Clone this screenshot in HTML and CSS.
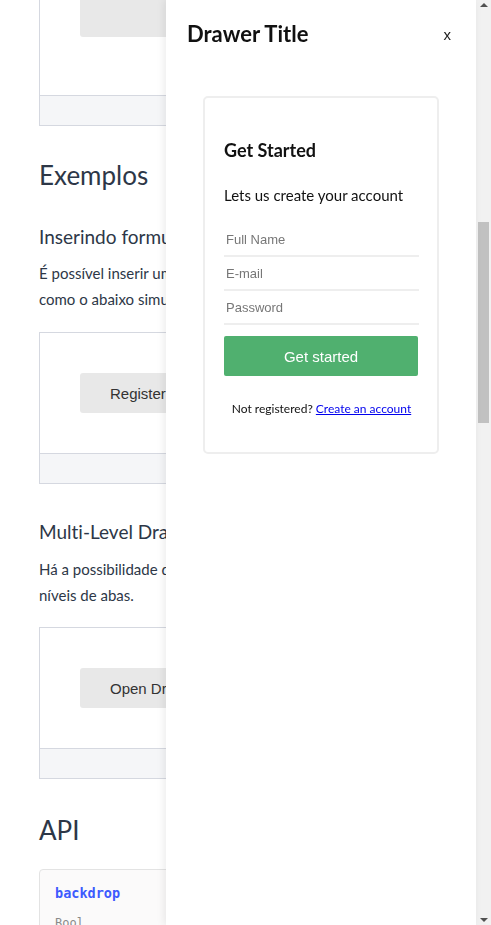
FILE: index.html
```html
<!DOCTYPE html>
<html lang="pt">
<head>
<meta charset="utf-8">
<title>Drawer</title>
<link rel="stylesheet" href="styles.css">
</head>
<body>
<div class="layout">
  <main class="page">
    <div class="demo demo-first">
      <div class="demo-body demo-body-first"><button class="demo-btn demo-btn-tall">Open Drawer</button></div>
      <div class="demo-foot"></div>
    </div>

    <h2 class="h2">Exemplos</h2>
    <h3 class="h3">Inserindo formulários</h3>
    <p class="para">É possível inserir um formulário dentro do drawer,<br>como o abaixo simulando um cadastro.</p>
    <div class="demo">
      <div class="demo-body"><button class="demo-btn">Register now</button></div>
      <div class="demo-foot"></div>
    </div>

    <h3 class="h3 h3-b">Multi-Level Drawer</h3>
    <p class="para para-b">Há a possibilidade de abrir múltiplos<br>níveis de abas.</p>
    <div class="demo demo-last">
      <div class="demo-body"><button class="demo-btn">Open Drawer</button></div>
      <div class="demo-foot"></div>
    </div>

    <h2 class="h2 h2-api">API</h2>
    <div class="api-card">
      <div class="api-name">backdrop</div>
      <div class="api-type">Bool</div>
    </div>
  </main>

  <div class="scrollbar">
    <div class="sb-arrow sb-up"></div>
    <div class="sb-track"><div class="sb-thumb"></div></div>
    <div class="sb-arrow sb-down"></div>
  </div>
</div>

<aside class="drawer">
  <header class="drawer-head">
    <h1 class="drawer-title">Drawer Title</h1>
    <span class="drawer-close">x</span>
  </header>
  <div class="card">
    <h2 class="card-title">Get Started</h2>
    <p class="card-sub">Lets us create your account</p>
    <input class="field" type="text" placeholder="Full Name">
    <input class="field" type="text" placeholder="E-mail">
    <input class="field" type="password" placeholder="Password">
    <button class="go-btn">Get started</button>
    <p class="card-foot">Not registered? <a href="#" class="card-link">Create an account</a></p>
  </div>
</aside>
</body>
</html>
```

FILE: styles.css
```css
* { box-sizing: border-box; }
html, body { margin: 0; padding: 0; height: 100%; overflow: hidden; background: #fff; }
body { font-family: Lato, "Noto Sans", sans-serif; color: #2d3747; font-variant-ligatures: no-common-ligatures; }

.layout { display: flex; height: 925px; }
.page { flex: 1; overflow: hidden; padding-left: 39px; }

.demo {
  width: 420px;
  border: 1px solid #d5d8e0;
  margin-top: 20px;
}
.demo-first { margin-top: -86px; }
.demo-last { margin-top: 19px; }
.demo-body { padding: 40px; background: #fff; }
.demo-body-first { padding-bottom: 58px; }
.demo-btn {
  display: block;
  height: 40px;
  width: 200px;
  border: 0;
  border-radius: 3px;
  background: #e8e8e8;
  color: #333;
  font-family: "Liberation Sans", Arial, sans-serif;
  font-size: 15px;
  text-align: left;
  padding: 0 0 0 30px;
}
.demo-btn-tall { height: 82px; padding-bottom: 42px; }
.demo-foot { height: 30px; border-top: 1px solid #d5d8e0; background: #f5f6f8; }

.h2 { margin: 29px 0 0; font-size: 26px; line-height: 40px; font-weight: 400; color: #2d3747; }
.h3 { margin: 28px 0 0; font-size: 19px; line-height: 28px; font-weight: 400; color: #2d3747; }
.h3-b { margin-top: 34px; }
.para { margin: 9px 0 0; font-size: 15px; line-height: 26px; white-space: nowrap; }
.para-b { margin-top: 10px; }
.h2-api { margin-top: 31px; }

.api-card {
  width: 420px;
  margin-top: 19px;
  border: 1px solid #e3e3e3;
  border-radius: 4px;
  background: #fbfafa;
  padding: 12px 15px;
  font-family: "DejaVu Sans Mono", monospace;
}
.api-name { font-size: 13.5px; font-weight: 700; color: #3d5afe; line-height: 22px; }
.api-type { margin-top: 11px; font-size: 12px; color: #8a8a8a; line-height: 16px; }

.scrollbar { width: 15px; background: #f1f1f1; display: flex; flex-direction: column; }
.sb-arrow { height: 15px; display: flex; justify-content: center; }
.sb-up { align-items: flex-start; padding-top: 3px; }
.sb-up::before { content: ""; border-left: 4px solid transparent; border-right: 4px solid transparent; border-bottom: 4px solid #505050; }
.sb-down { align-items: flex-end; padding-bottom: 3px; }
.sb-down::before { content: ""; border-left: 4px solid transparent; border-right: 4px solid transparent; border-top: 4px solid #505050; }
.sb-track { flex: 1; padding: 207px 2px 0; }
.sb-thumb { height: 201px; background: #c1c1c1; }

.drawer {
  position: fixed;
  top: 0;
  bottom: 0;
  right: 15px;
  width: 310px;
  background: #fff;
  box-shadow: -2px 0 8px rgba(0, 0, 0, 0.08);
  display: flex;
  flex-direction: column;
}
.drawer-head { display: flex; justify-content: space-between; align-items: center; padding: 14px 25px 0 21px; height: 54px; }
.drawer-title { margin: 0; font-size: 22px; font-weight: 700; color: #111; line-height: 28px; }
.drawer-close { font-family: "Liberation Sans", Arial, sans-serif; font-size: 15px; color: #222; }

.card {
  margin: 42px 37px 0;
  border: 2px solid #eee;
  border-radius: 5px;
  padding: 38px 18px 34px 19px;
  display: flex;
  flex-direction: column;
}
.card-title { margin: 0; font-size: 18px; font-weight: 700; color: #111; line-height: 28px; }
.card-sub { margin: 20px 0 0; font-size: 15px; color: #111; line-height: 22px; }
.field {
  margin-top: 17px;
  height: 34px;
  border: 0;
  border-bottom: 2px solid #eee;
  padding: 0 2px;
  font-family: "Liberation Sans", Arial, sans-serif;
  font-size: 13px;
  color: #333;
  outline: none;
}
.field + .field { margin-top: 0; }
.field::placeholder { color: #777; }
.go-btn {
  margin-top: 11px;
  width: 194px;
  height: 40px;
  border: 0;
  border-radius: 2px;
  background: #50b06f;
  color: #fff;
  font-family: "Liberation Sans", Arial, sans-serif;
  font-size: 15px;
}
.card-foot { margin: 24px 0 0; text-align: center; font-size: 12px; color: #111; line-height: 18px; }
.card-link { color: #0000ee; text-decoration: underline; }
```
